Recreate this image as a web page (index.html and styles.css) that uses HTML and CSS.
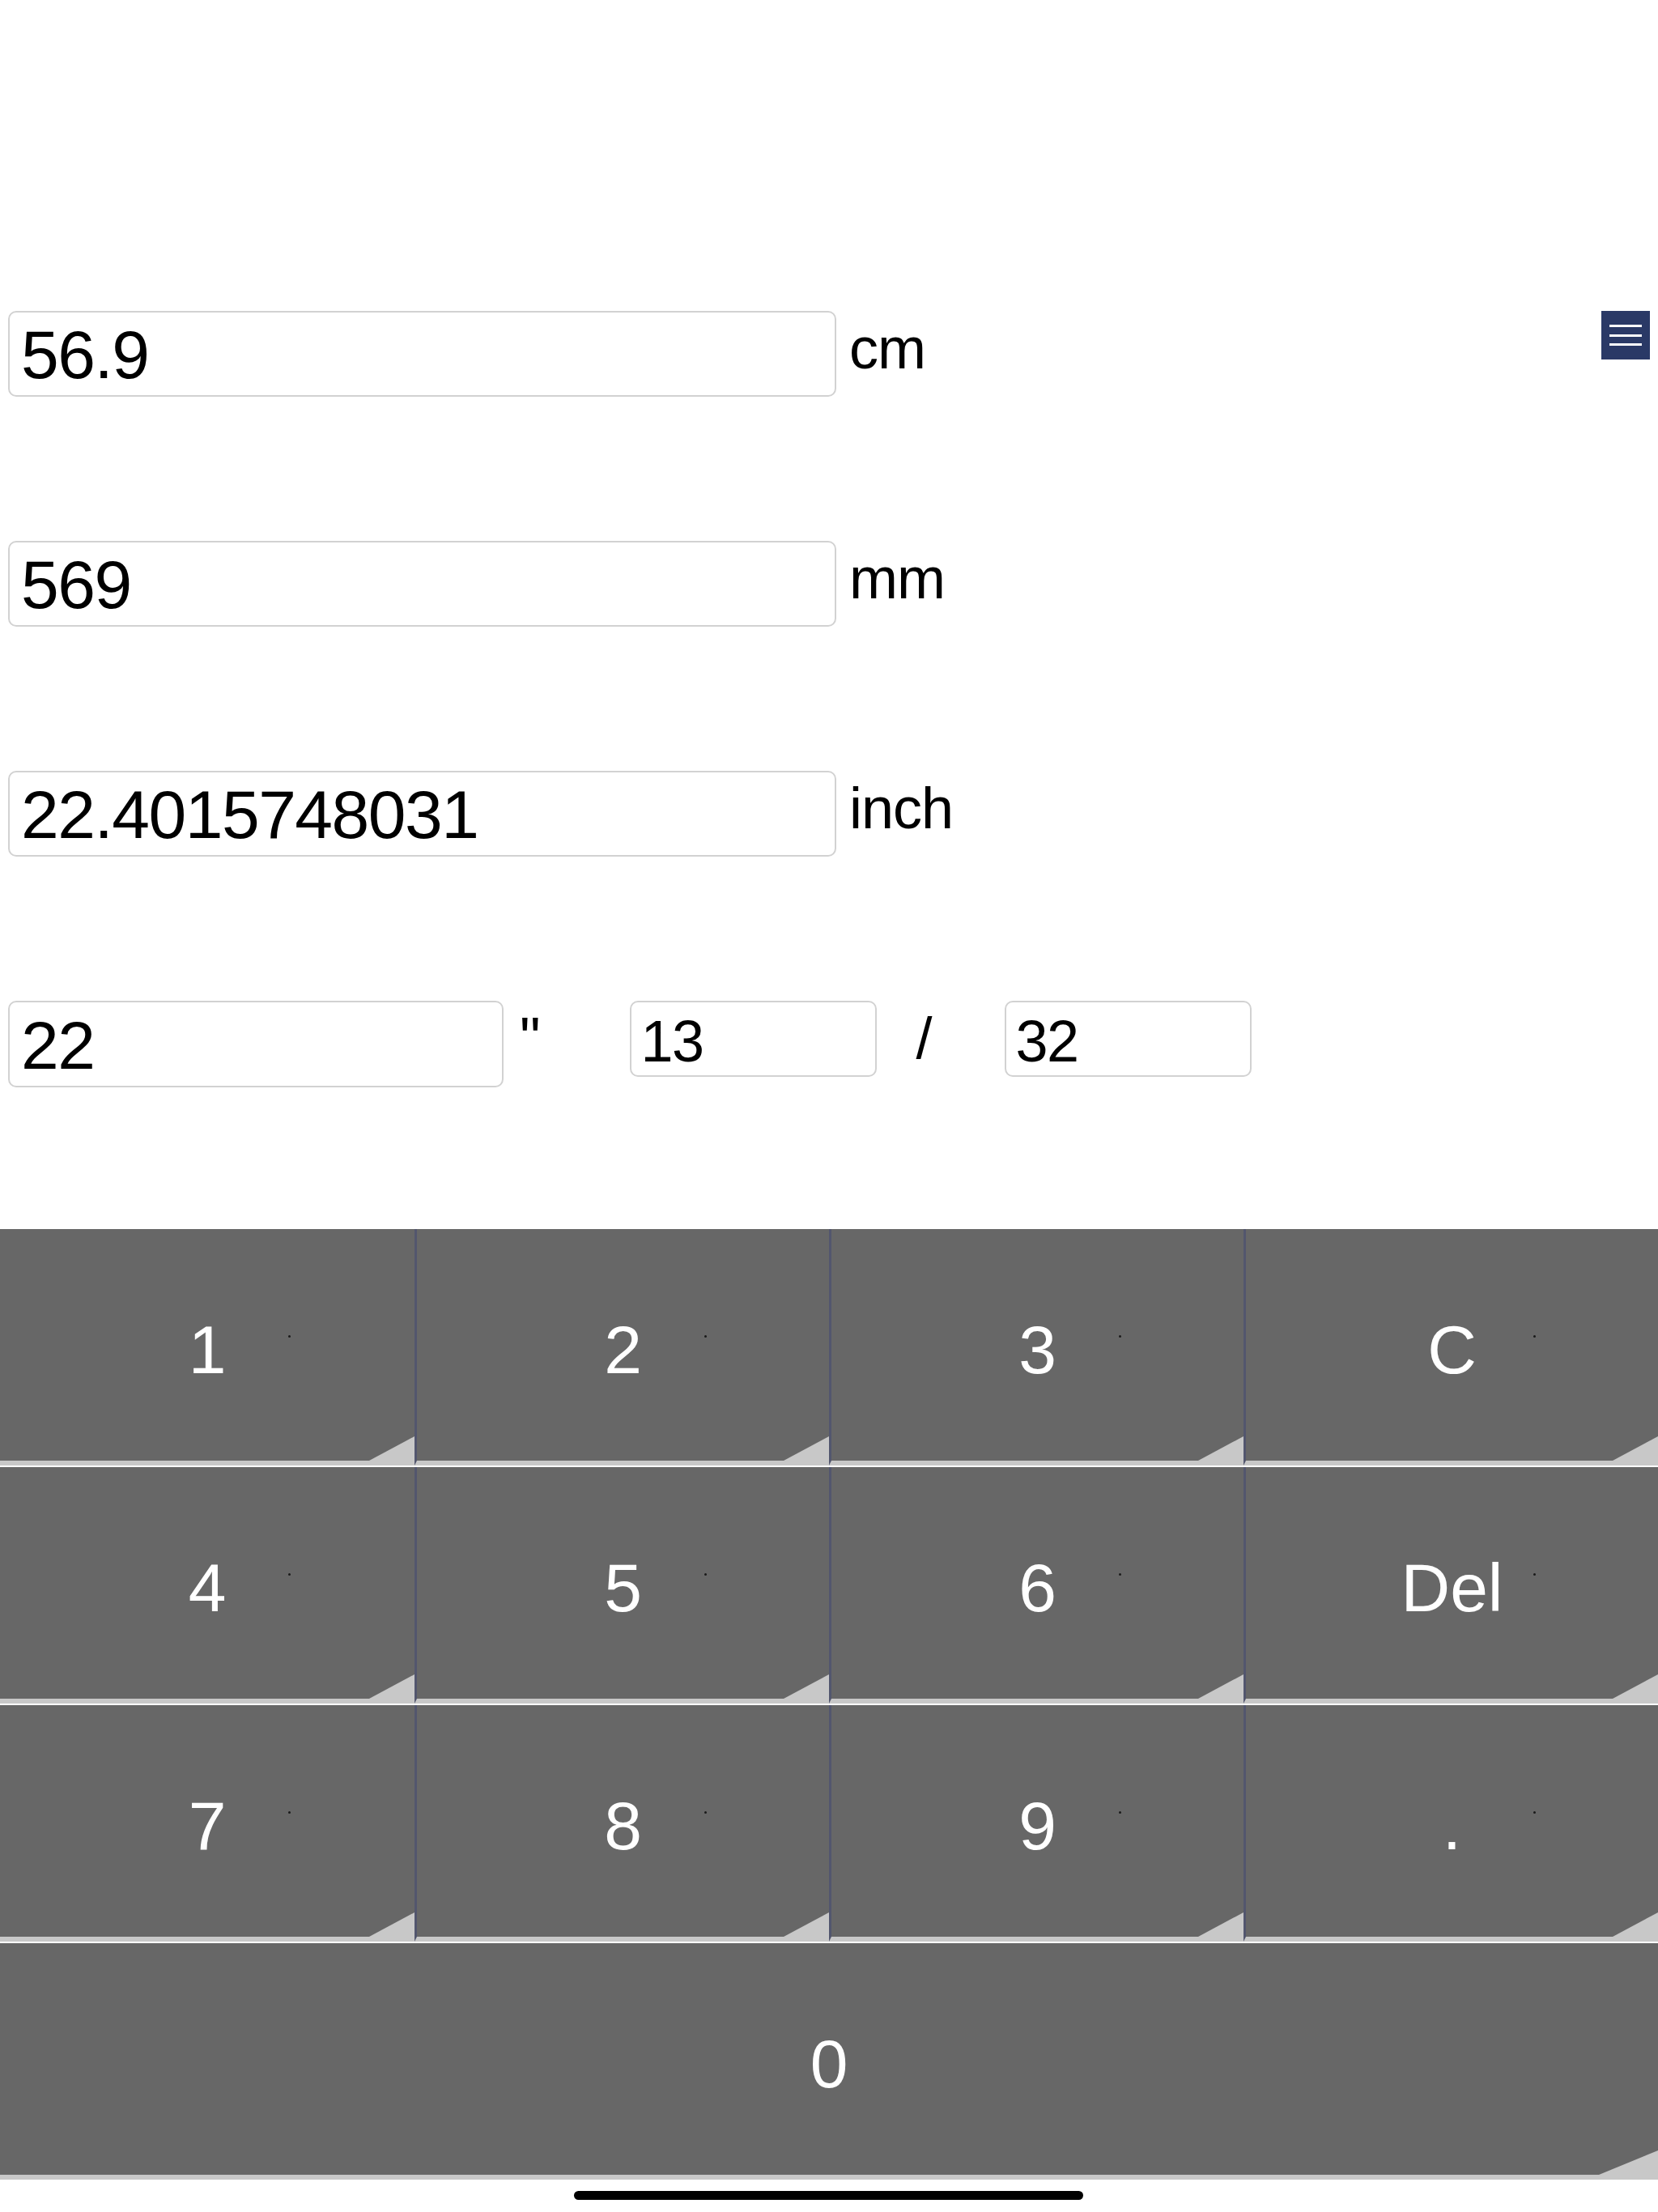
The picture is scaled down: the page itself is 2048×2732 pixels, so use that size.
FILE: index.html
```html
<!DOCTYPE html>
<html lang="en">
<head>
  <meta charset="UTF-8">
  <title>Length Converter</title>
  <link rel="stylesheet" href="styles.css">
</head>
<body>
  <div id="converter">
    <div class="row">
      <input type="text" class="field wide" id="cm" value="56.9">
      <span class="unit">cm</span>
      <button type="button" id="btnMenu" aria-label="Menu">
        <span></span><span></span><span></span>
      </button>
    </div>

    <div class="row">
      <input type="text" class="field wide" id="mm" value="569">
      <span class="unit">mm</span>
    </div>

    <div class="row">
      <input type="text" class="field wide" id="inch" value="22.4015748031">
      <span class="unit">inch</span>
    </div>

    <!-- whole inches + fraction -->
    <div class="row">
      <input type="text" class="field whole" id="inchWhole" value="22">
      <span class="mark">"</span>
      <input type="text" class="field frac" id="numerator" value="13">
      <span class="slash">/</span>
      <input type="text" class="field frac" id="denominator" value="32">
    </div>
  </div>

  <div id="keypad">
    <button type="button" class="key">1<i class="dot"></i></button>
    <button type="button" class="key">2<i class="dot"></i></button>
    <button type="button" class="key">3<i class="dot"></i></button>
    <button type="button" class="key">C<i class="dot"></i></button>
    <button type="button" class="key">4<i class="dot"></i></button>
    <button type="button" class="key">5<i class="dot"></i></button>
    <button type="button" class="key">6<i class="dot"></i></button>
    <button type="button" class="key">Del<i class="dot"></i></button>
    <button type="button" class="key">7<i class="dot"></i></button>
    <button type="button" class="key">8<i class="dot"></i></button>
    <button type="button" class="key">9<i class="dot"></i></button>
    <button type="button" class="key">.<i class="dot"></i></button>
    <button type="button" class="key zero">0</button>
  </div>

  <div id="homeBar"></div>
</body>
</html>
```

FILE: styles.css
```css
body {
  margin: 0;
  font-family: "Liberation Sans", Arial, sans-serif;
  background-color: #fff;
  color: #000;
  width: 2048px;
  height: 2732px;
  position: relative;
  overflow: hidden;
}

#converter {
  padding: 384px 10px 0 10px;
}

.row {
  display: flex;
  align-items: flex-start;
  margin-bottom: 178px;
}
.row:last-child {
  margin-bottom: 0;
}

.field {
  box-sizing: border-box;
  height: 106px;
  padding: 3px 14px 0;
  border: 2px solid #d2d2d2;
  border-radius: 10px;
  font-family: "Liberation Sans", Arial, sans-serif;
  font-size: 84px;
  letter-spacing: -1.5px;
  color: #000;
  background: #fff;
  outline: none;
}
.field.wide { width: 1023px; }
.field.whole { width: 612px; height: 107px; }
.field.frac {
  width: 305px;
  height: 94px;
  padding: 5px 12px 0;
  font-size: 72px;
}

.unit, .mark, .slash {
  font-size: 72px;
  margin-top: 5px;
}
.unit { margin-left: 16px; letter-spacing: -1px; }
.mark { margin-left: 20px; margin-right: 110px; }
.slash { margin-left: 49px; margin-right: 89px; }

#btnMenu {
  margin-left: auto;
  width: 60px;
  height: 60px;
  padding: 17px 10px;
  border: none;
  background-color: #2a3966;
  display: flex;
  flex-direction: column;
  justify-content: space-between;
  box-sizing: border-box;
}
#btnMenu span {
  display: block;
  height: 3px;
  background: #fff;
}

#keypad {
  margin-top: 175px;
  display: grid;
  grid-template-columns: repeat(4, 1fr);
  grid-auto-rows: 292px;
  row-gap: 2px;
  background: #fff;
}

.key {
  position: relative;
  border: none;
  border-bottom: 6px solid #c8c8c8;
  background-color: #676767;
  color: #fff;
  font-family: "Liberation Sans", Arial, sans-serif;
  font-size: 84px;
  padding: 12px 0 0;
  margin: 0;
}
.key:not(:nth-child(4n+1)) {
  border-left: 3px solid #52566e;
}
.key::after {
  content: "";
  position: absolute;
  right: 0;
  bottom: 0;
  width: 56px;
  height: 30px;
  background: #c8c8c8;
  clip-path: polygon(100% 0, 100% 100%, 0 100%);
}
.key.zero { grid-column: span 4; }
.key.zero::after { width: 73px; }

.dot {
  position: absolute;
  left: calc(50% + 100px);
  top: calc(50% - 12px);
  width: 3px;
  height: 3px;
  border-radius: 50%;
  background: #1a1a1a;
}

#homeBar {
  position: absolute;
  left: 709px;
  bottom: 15px;
  width: 629px;
  height: 11px;
  border-radius: 6px;
  background: #000;
}
```
